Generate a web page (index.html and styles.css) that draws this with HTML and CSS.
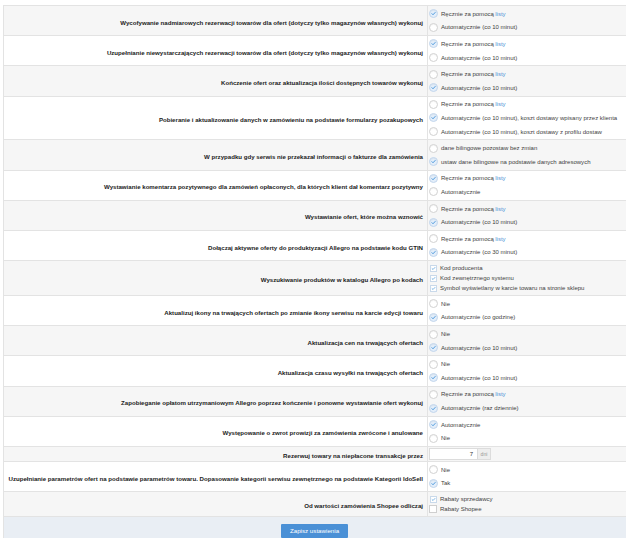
FILE: index.html
```html
<!DOCTYPE html>
<html lang="pl">
<head>
<meta charset="utf-8">
<title>Ustawienia</title>
<link rel="stylesheet" href="styles.css">
</head>
<body>
<table class="settings">
<colgroup><col class="c-label"><col class="c-val"></colgroup>
<tbody>
<tr class="odd">
<th>Wycofywanie nadmiarowych rezerwacji towarów dla ofert (dotyczy tylko magazynów własnych) wykonuj</th>
<td>
<div class="opt"><span class="radio on"><svg viewBox="0 0 10 10"><path d="M2.7 5.2 4.3 6.8 7.4 3.5"/></svg></span>Ręcznie za pomocą <a href="#">listy</a></div>
<div class="opt"><span class="radio"></span>Automatycznie (co 10 minut)</div>
</td>
</tr>
<tr>
<th>Uzupełnianie niewystarczających rezerwacji towarów dla ofert (dotyczy tylko magazynów własnych) wykonuj</th>
<td>
<div class="opt"><span class="radio on"><svg viewBox="0 0 10 10"><path d="M2.7 5.2 4.3 6.8 7.4 3.5"/></svg></span>Ręcznie za pomocą <a href="#">listy</a></div>
<div class="opt"><span class="radio"></span>Automatycznie (co 10 minut)</div>
</td>
</tr>
<tr class="odd">
<th>Kończenie ofert oraz aktualizacja ilości dostępnych towarów wykonuj</th>
<td>
<div class="opt"><span class="radio"></span>Ręcznie za pomocą <a href="#">listy</a></div>
<div class="opt"><span class="radio on"><svg viewBox="0 0 10 10"><path d="M2.7 5.2 4.3 6.8 7.4 3.5"/></svg></span>Automatycznie (co 10 minut)</div>
</td>
</tr>
<tr>
<th>Pobieranie i aktualizowanie danych w zamówieniu na podstawie formularzy pozakupowych</th>
<td>
<div class="opt"><span class="radio"></span>Ręcznie za pomocą <a href="#">listy</a></div>
<div class="opt"><span class="radio on"><svg viewBox="0 0 10 10"><path d="M2.7 5.2 4.3 6.8 7.4 3.5"/></svg></span>Automatycznie (co 10 minut), koszt dostawy wpisany przez klienta</div>
<div class="opt"><span class="radio"></span>Automatycznie (co 10 minut), koszt dostawy z profilu dostaw</div>
</td>
</tr>
<tr class="odd">
<th>W przypadku gdy serwis nie przekazał informacji o fakturze dla zamówienia</th>
<td>
<div class="opt"><span class="radio"></span>dane bilingowe pozostaw bez zmian</div>
<div class="opt"><span class="radio on"><svg viewBox="0 0 10 10"><path d="M2.7 5.2 4.3 6.8 7.4 3.5"/></svg></span>ustaw dane bilingowe na podstawie danych adresowych</div>
</td>
</tr>
<tr>
<th>Wystawianie komentarza pozytywnego dla zamówień opłaconych, dla których klient dał komentarz pozytywny</th>
<td>
<div class="opt"><span class="radio on"><svg viewBox="0 0 10 10"><path d="M2.7 5.2 4.3 6.8 7.4 3.5"/></svg></span>Ręcznie za pomocą <a href="#">listy</a></div>
<div class="opt"><span class="radio"></span>Automatycznie</div>
</td>
</tr>
<tr class="odd">
<th>Wystawianie ofert, które można wznowić</th>
<td>
<div class="opt"><span class="radio"></span>Ręcznie za pomocą <a href="#">listy</a></div>
<div class="opt"><span class="radio on"><svg viewBox="0 0 10 10"><path d="M2.7 5.2 4.3 6.8 7.4 3.5"/></svg></span>Automatycznie (co 10 minut)</div>
</td>
</tr>
<tr>
<th>Dołączaj aktywne oferty do produktyzacji Allegro na podstawie kodu GTIN</th>
<td>
<div class="opt"><span class="radio"></span>Ręcznie za pomocą <a href="#">listy</a></div>
<div class="opt"><span class="radio on"><svg viewBox="0 0 10 10"><path d="M2.7 5.2 4.3 6.8 7.4 3.5"/></svg></span>Automatycznie (co 30 minut)</div>
</td>
</tr>
<tr class="odd">
<th>Wyszukiwanie produktów w katalogu Allegro po kodach</th>
<td>
<div class="checks">
<div class="chk-opt"><span class="check on"><svg viewBox="0 0 10 10"><path d="M2.2 5.2 4.1 7 7.9 2.9"/></svg></span>Kod producenta</div>
<div class="chk-opt"><span class="check on"><svg viewBox="0 0 10 10"><path d="M2.2 5.2 4.1 7 7.9 2.9"/></svg></span>Kod zewnętrznego systemu</div>
<div class="chk-opt"><span class="check on"><svg viewBox="0 0 10 10"><path d="M2.2 5.2 4.1 7 7.9 2.9"/></svg></span>Symbol wyświetlany w karcie towaru na stronie sklepu</div>
</div>
</td>
</tr>
<tr>
<th>Aktualizuj ikony na trwających ofertach po zmianie ikony serwisu na karcie edycji towaru</th>
<td>
<div class="opt"><span class="radio"></span>Nie</div>
<div class="opt"><span class="radio on"><svg viewBox="0 0 10 10"><path d="M2.7 5.2 4.3 6.8 7.4 3.5"/></svg></span>Automatycznie (co godzinę)</div>
</td>
</tr>
<tr class="odd">
<th>Aktualizacja cen na trwających ofertach</th>
<td>
<div class="opt"><span class="radio"></span>Nie</div>
<div class="opt"><span class="radio on"><svg viewBox="0 0 10 10"><path d="M2.7 5.2 4.3 6.8 7.4 3.5"/></svg></span>Automatycznie (co 10 minut)</div>
</td>
</tr>
<tr>
<th>Aktualizacja czasu wysyłki na trwających ofertach</th>
<td>
<div class="opt"><span class="radio"></span>Nie</div>
<div class="opt"><span class="radio on"><svg viewBox="0 0 10 10"><path d="M2.7 5.2 4.3 6.8 7.4 3.5"/></svg></span>Automatycznie (co 10 minut)</div>
</td>
</tr>
<tr class="odd">
<th>Zapobieganie opłatom utrzymaniowym Allegro poprzez kończenie i ponowne wystawianie ofert wykonuj</th>
<td>
<div class="opt"><span class="radio"></span>Ręcznie za pomocą <a href="#">listy</a></div>
<div class="opt"><span class="radio on"><svg viewBox="0 0 10 10"><path d="M2.7 5.2 4.3 6.8 7.4 3.5"/></svg></span>Automatycznie (raz dziennie)</div>
</td>
</tr>
<tr>
<th>Występowanie o zwrot prowizji za zamówienia zwrócone i anulowane</th>
<td>
<div class="opt"><span class="radio on"><svg viewBox="0 0 10 10"><path d="M2.7 5.2 4.3 6.8 7.4 3.5"/></svg></span>Automatycznie</div>
<div class="opt"><span class="radio"></span>Nie</div>
</td>
</tr>
<tr class="odd">
<th>Rezerwuj towary na niepłacone transakcje przez</th>
<td class="input-cell">
<div class="input-group"><span class="field">7</span><span class="addon">dni</span></div>
</td>
</tr>
<tr>
<th>Uzupełnianie parametrów ofert na podstawie parametrów towaru. Dopasowanie kategorii serwisu zewnętrznego na podstawie Kategorii IdoSell</th>
<td>
<div class="opt"><span class="radio"></span>Nie</div>
<div class="opt"><span class="radio on"><svg viewBox="0 0 10 10"><path d="M2.7 5.2 4.3 6.8 7.4 3.5"/></svg></span>Tak</div>
</td>
</tr>
<tr class="odd">
<th>Od wartości zamówienia Shopee odliczaj</th>
<td>
<div class="checks">
<div class="chk-opt"><span class="check on"><svg viewBox="0 0 10 10"><path d="M2.2 5.2 4.1 7 7.9 2.9"/></svg></span>Rabaty sprzedawcy</div>
<div class="chk-opt"><span class="check big"></span>Rabaty Shopee</div>
</div>
</td>
</tr>
<tr class="footer">
<td colspan="2"><button class="save" type="button">Zapisz ustawienia</button></td>
</tr>
</tbody>
</table>
</body>
</html>
```
FILE: styles.css
```css
html, body {
  background: #fff;
}
body {
  margin: 5px 2px 0 3px;
  font-family: "Liberation Sans", Arial, sans-serif;
  color: #444;
}
.settings {
  width: 623px;
  border-collapse: collapse;
  table-layout: fixed;
  border: 1px solid #e3e3e3;
}
.c-label { width: 424px; }
.c-val { width: 199px; }
.settings tr.odd { background: #f6f6f6; }
.settings th {
  font-weight: bold;
  font-size: 6.12px;
  line-height: 8px;
  color: #222;
  text-align: right;
  vertical-align: middle;
  padding: 4px 4px 0 4px;
  border: 1px solid #e3e3e3;
}
.settings td {
  vertical-align: middle;
  padding: 1px 2px 1px 1px;
  border: 1px solid #e3e3e3;
}
.opt {
  display: flex;
  align-items: center;
  height: 13.6px;
  font-size: 6.02px;
  color: #3f3f3f;
  white-space: nowrap;
}
.opt a, .chk-opt a {
  color: #5295d6;
  text-decoration: none;
  margin-left: 1.4px;
}
.radio {
  flex: none;
  box-sizing: border-box;
  width: 9px;
  height: 9px;
  border-radius: 50%;
  border: 1px solid #d2d2d2;
  background: #fff;
  margin-right: 3px;
  box-shadow: inset 0 1px 1px rgba(0,0,0,0.05);
  display: flex;
}
.radio.on {
  background: #e3eefa;
  border-color: #c3d6ec;
}
.radio svg, .check svg {
  width: 100%;
  height: 100%;
}
.radio svg path, .check svg path {
  fill: none;
  stroke: #3d8fd8;
  stroke-width: 1.3;
  stroke-linecap: round;
  stroke-linejoin: round;
}
.checks {
  padding: 1px 0;
}
.chk-opt {
  display: flex;
  align-items: center;
  height: 10px;
  font-size: 6.02px;
  color: #3f3f3f;
  white-space: nowrap;
}
.check {
  flex: none;
  box-sizing: border-box;
  width: 7px;
  height: 7px;
  border: 1px solid #cfcfcf;
  background: #fff;
  margin: 0 3.5px 0 0.5px;
  display: flex;
}
.check.on {
  border-color: #c9d9ea;
}
.check.big {
  width: 8px;
  height: 8px;
  margin: 0 3px 0 0;
}
.input-cell {
  padding-top: 3px;
  padding-bottom: 3px;
}
.input-group {
  display: flex;
  height: 12px;
}
.field {
  box-sizing: border-box;
  width: 49px;
  height: 12px;
  border: 1px solid #dcdcdc;
  background: #fff;
  font-size: 6px;
  color: #333;
  text-align: right;
  padding-right: 4px;
  line-height: 10px;
}
.addon {
  box-sizing: border-box;
  width: 13px;
  height: 12px;
  background: #eeeeee;
  border: 1px solid #dcdcdc;
  border-left: none;
  font-size: 5.2px;
  color: #999;
  text-align: center;
  line-height: 10px;
}
.settings tr.footer td {
  background: #e9eef4;
  text-align: center;
  padding: 2px 0 3px 0;
  height: 15px;
}
.save {
  width: 67px;
  height: 14px;
  border: none;
  border-radius: 1px;
  background: #4a90d6;
  color: #fff;
  font-family: "Liberation Sans", Arial, sans-serif;
  font-size: 6.2px;
  padding: 0;
  margin-left: -1px;
  cursor: pointer;
}
```
